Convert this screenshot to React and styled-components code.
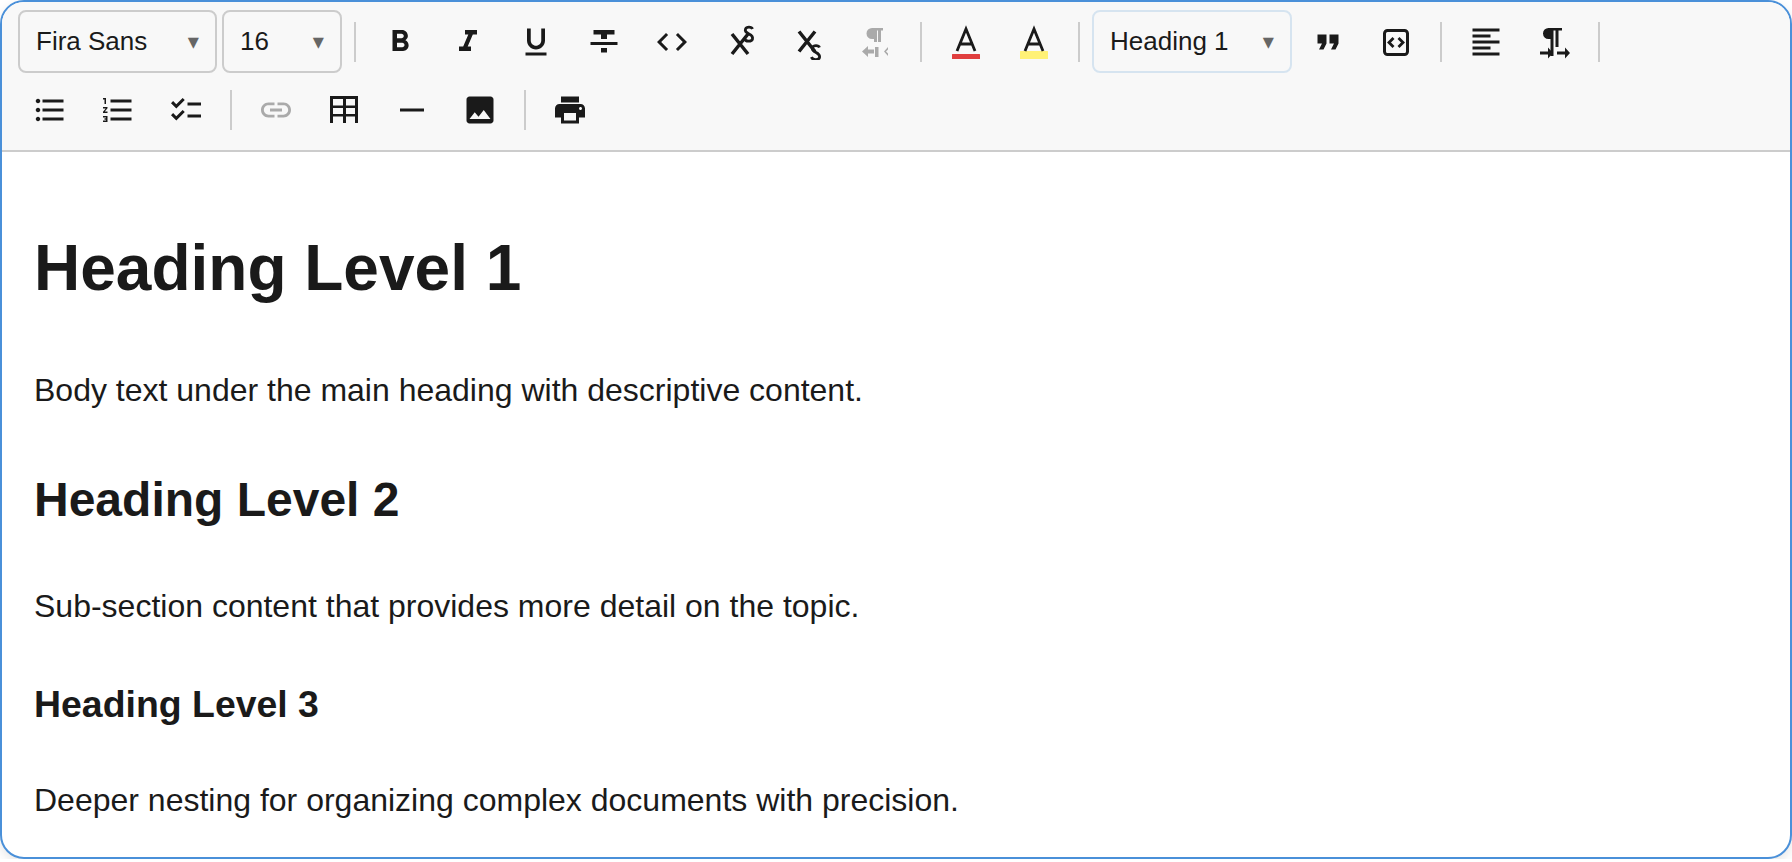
import React from "react";
import styled, { createGlobalStyle } from "styled-components";
import {
  MdFormatBold, MdFormatItalic, MdFormatUnderlined, MdFormatStrikethrough, MdCode,
  MdFormatQuote, MdFormatAlignLeft, MdFormatListBulleted, MdFormatListNumbered,
  MdChecklist, MdLink, MdHorizontalRule, MdImage, MdPrint,
} from "react-icons/md";

const Global = createGlobalStyle`
  html, body { margin: 0; padding: 0; background: #fff; }
  body { font-family: "Liberation Sans", Arial, sans-serif; }
  * { box-sizing: border-box; }
`;

const Card = styled.div`
  height: 859px;
  border: 2px solid #4a90d9;
  border-radius: 24px;
  overflow: hidden;
  background: #fff;
  box-shadow: 0 4px 12px rgba(0, 0, 0, 0.1);
`;
const Toolbar = styled.div`
  height: 150px;
  background: #f8f8f8;
  border-bottom: 2px solid #ccc;
  padding: 8px 16px 0;
  display: flex;
  flex-direction: column;
  gap: 6px;
`;
const Row = styled.div`
  display: flex;
  align-items: center;
  height: ${(p) => p.$h}px;
  padding-left: ${(p) => p.$pl || 0}px;
`;
const Select = styled.div`
  width: ${(p) => p.$w}px;
  height: 63px;
  margin-right: ${(p) => p.$mr || 0}px;
  margin-left: ${(p) => p.$ml || 0}px;
  border: 2px solid ${(p) => (p.$accent ? "#d6e4f0" : "#ccc")};
  border-radius: 8px;
  padding: 0 16px;
  display: flex;
  align-items: center;
  justify-content: space-between;
  font-size: 26px;
  color: #1a1a1a;
`;
const Caret = styled.span`
  font-size: 14.5px;
  color: #666;
  font-family: "DejaVu Sans", sans-serif;
`;
const Sep = styled.div`
  width: 2px;
  height: 40px;
  background: #ccc;
  margin: 0 14px 0 ${(p) => p.$ml || 14}px;
`;
const Btn = styled.div`
  width: 60px;
  height: 60px;
  margin-right: ${(p) => (p.$last ? 0 : 8)}px;
  display: flex;
  align-items: center;
  justify-content: center;
  color: ${(p) => (p.$off ? "#aaa" : "#1a1a1a")};
  svg { display: block; }
`;
const Content = styled.div`
  padding: 16px 32px;
  color: #1a1a1a;
  font-size: 32px;
  line-height: 1.7;
  h1, h2, h3 { font-weight: 700; }
  h1 { font-size: 64px; margin: 45.5px 0 40.5px; }
  h2 { font-size: 48px; margin: 42px 0 38px; }
  h3 { font-size: 37.44px; margin: 39.5px 0 37px; }
  p { margin: 32px 0; }
`;

const I = 36;
const Svg = ({ children }) => (
  <svg width={I} height={I} viewBox="0 0 36 36" fill="currentColor">{children}</svg>
);
const sCurve = "M8.500 3C7.500 .6 2.500 .6 1.500 3 .5 5.500 3 7 5 8c2.500 1.200 4 2.500 3.500 5-1 3-7 3-8 -.5";
const Sup = () => (
  <Svg>
    <path d="M10 30L26 10M10 10l16 20" stroke="currentColor" strokeWidth="3.500" fill="none" />
    <path d={sCurve} transform="translate(22 2)" stroke="currentColor" strokeWidth="2.800" fill="none" />
  </Svg>
);
const Sub = () => (
  <Svg>
    <path d="M9 7.500l16 20M25 7.500l-16 20" stroke="currentColor" strokeWidth="3.500" fill="none" />
    <path d={sCurve} transform="translate(21 20.500)" stroke="currentColor" strokeWidth="2.800" fill="none" />
  </Svg>
);
const ParaLeft = () => (
  <Svg>
    <path d="M16 4h-2a5.500 5.500 0 0 0 0 11h2v3h3V6.500h1V18h3V6.500H25V4z" />
    <path d="M4 27.500l6-5.500v3.500h6v4h-6V33zM17 23h3.500v10H17zM30 23l-4 4.500 4 4.500v-2.500l-2-2 2-2z" />
  </Svg>
);
const ParaRight = () => (
  <Svg>
    <path d="M14.500 4h-2a5.500 5.500 0 0 0 0 11h2v17h3V6.500h2V23h3V6.500H26V4z" />
    <path d="M4 27.400h8V23.500l5 5.500-5 5.500v-3.900H4zM21 27.400h8V23.500l5 5.500-5 5.500v-3.900h-8z" />
  </Svg>
);
const CodeBlock = () => (
  <Svg>
    <rect x="6.500" y="6.500" width="23" height="24" rx="3" fill="none" stroke="currentColor" strokeWidth="3" />
    <path d="M15.500 14L11 18.500l4.500 4.500M20.500 14l4.500 4.500-4.500 4.500" fill="none" stroke="currentColor" strokeWidth="2.800" />
  </Svg>
);
const Table = () => (
  <Svg>
    <path d="M4 4h28v27h-3v-6.500h-9V31h-3v-6.500H7V31H4zM7 7v6.500h10V7zM20 7v6.500h9V7zM7 16v6h10v-6zM20 16v6h9v-6z" fillRule="evenodd" />
  </Svg>
);
const FontColor = ({ color, tall }) => (
  <Svg>
    <rect x="4" y={tall ? 27 : 30} width="28" height={tall ? 8 : 5} fill={color} rx="0.500" />
    <path d="M9 27L18 5l9 22M11.500 20h13" fill="none" stroke="currentColor" strokeWidth="2.800" />
  </Svg>
);

export default function App() {
  return (
    <>
      <Global />
      <Card>
        <Toolbar>
          <Row $h={63}>
            <Select $w={199} $mr={5}>Fira Sans<Caret>▼</Caret></Select>
            <Select $w={120}>16<Caret>▼</Caret></Select>
            <Sep $ml={12} />
            <Btn><MdFormatBold size={I} /></Btn>
            <Btn><MdFormatItalic size={I} /></Btn>
            <Btn><MdFormatUnderlined size={I} /></Btn>
            <Btn><MdFormatStrikethrough size={I} /></Btn>
            <Btn><MdCode size={I} /></Btn>
            <Btn><Sup /></Btn>
            <Btn><Sub /></Btn>
            <Btn $off $last><ParaLeft /></Btn>
            <Sep />
            <Btn><FontColor color="#e03e3e" /></Btn>
            <Btn $last><FontColor color="#fff176" tall /></Btn>
            <Sep />
            <Select $w={200} $mr={6} $ml={-2} $accent>Heading 1<Caret>▼</Caret></Select>
            <Btn><MdFormatQuote size={I} /></Btn>
            <Btn $last><CodeBlock /></Btn>
            <Sep />
            <Btn><MdFormatAlignLeft size={I} /></Btn>
            <Btn $last><ParaRight /></Btn>
            <Sep />
          </Row>
          <Row $h={62} $pl={2}>
            <Btn><MdFormatListBulleted size={I} /></Btn>
            <Btn><MdFormatListNumbered size={I} /></Btn>
            <Btn $last><MdChecklist size={I} /></Btn>
            <Sep />
            <Btn $off><MdLink size={I} /></Btn>
            <Btn><Table /></Btn>
            <Btn><MdHorizontalRule size={I} /></Btn>
            <Btn $last><MdImage size={I} /></Btn>
            <Sep />
            <Btn $last><MdPrint size={I} /></Btn>
          </Row>
        </Toolbar>
        <Content>
          <h1>Heading Level 1</h1>
          <p>Body text under the main heading with descriptive content.</p>
          <h2>Heading Level 2</h2>
          <p>Sub-section content that provides more detail on the topic.</p>
          <h3>Heading Level 3</h3>
          <p>Deeper nesting for organizing complex documents with precision.</p>
        </Content>
      </Card>
    </>
  );
}
